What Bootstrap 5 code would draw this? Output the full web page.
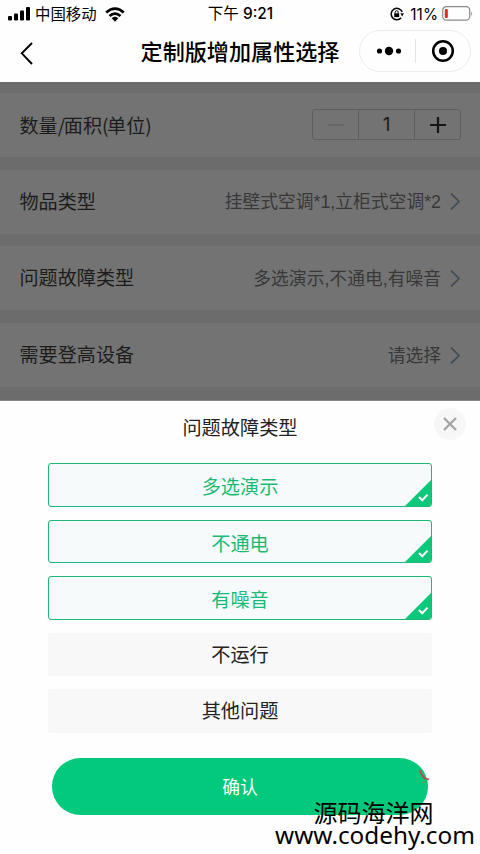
<!DOCTYPE html>
<html lang="zh-CN">
<head>
<meta charset="utf-8">
<meta name="viewport" content="width=device-width, initial-scale=1">
<title>定制版增加属性选择</title>
<link href="https://cdn.jsdelivr.net/npm/bootstrap@5.3.0/dist/css/bootstrap.min.css" rel="stylesheet">
<style>
  body { font-family: "Liberation Sans", "Noto Sans CJK SC", sans-serif; width: 480px; height: 854px; overflow: hidden; background: #fefefe; color: #000; }
  svg { display: block; flex: none; }
  .topbar { height: 82px; background: #fefefe; }
  .status-line { height: 27px; font-size: 15.4px; line-height: 27px; display: grid; grid-template-columns: 1fr auto 1fr; padding: 0 7px 0 8px; }
  .status-line svg { margin-top: -1px; }
  .carrier { padding-top: 1px; }
  .digits { font-family: Inter, "Noto Sans CJK SC", sans-serif; }
  .charge { margin-left: 6px; }
  .title-line { height: 50px; display: grid; grid-template-columns: 110px 260px 110px; }
  .title-text { font-size: 22.1px; font-weight: 500; line-height: 50px; padding-top: 1px; height: 50px; }
  .capsule { width: 112px; height: 42px; border: 1px solid #ececec; border-radius: 21px; margin-left: -11px; margin-top: -2px; }
  .capsule-rule { width: 1px; height: 24px; background: #e4e4e4; margin: 0 15px 0 12px; }
  .dimmed { height: 319px; background: #6c6c6c; padding-top: 10.8px; gap: 12.8px; border-bottom: 1px solid #858585; }
  .setting { height: 64px; flex: none; background: #737373; padding: 0 20px 0 19.5px; color: #1c1c1c; font-size: 19.1px; line-height: 28px; }
  .setting-name { padding-top: 2px; }
  .setting-name .latin { font-family: "Noto Sans CJK SC", sans-serif; letter-spacing: -1.4px; }
  .setting-value { font-size: 17.8px; color: #383838; gap: 9px; }
  .value-text { padding-top: 2px; }
  .stepper { width: 149px; height: 31px; border: 1px solid #5f5f5f; border-radius: 3px; margin-right: -1px; }
  .stepper > * { display: flex; align-items: center; justify-content: center; }
  .stepper-end { width: 45px; }
  .stepper-count { flex: 1; border: solid #5f5f5f; border-width: 0 1px; font-family: Inter, sans-serif; font-size: 19px; }
  .sheet { height: 453px; position: relative; }
  .sheet-title { font-size: 19.2px; line-height: 28px; padding-top: 14px; color: #222; margin-bottom: 20.4px; }
  .sheet-close { position: absolute; top: 7px; right: 14px; width: 32px; height: 32px; background: #f7f7f7; border: 0; padding: 0; }
  .choices { padding: 0 48px; gap: 12.8px; }
  .choice { height: 43.6px; background: #f8f8f8; border: 0; border-radius: 3px; padding: 2px 0 0; font-size: 19.2px; line-height: 41.6px; color: #222; position: relative; overflow: hidden; }
  .choice.picked { background: #f7fafa; border: 1.4px solid #1fb878; padding-top: 5px; line-height: 37px; color: #17bb76; }
  .choice svg { position: absolute; right: -1px; bottom: -1px; }
  .confirm { height: 57px; margin: 25px 52px 0; background: #02c97c; color: #fff; font-size: 17.8px; border: 0; padding: 5px 0 0; }
  .sitemark { position: absolute; right: 4px; bottom: 3px; width: 202px; color: #000; text-align: center; pointer-events: none; }
  .sitemark-name { font-size: 24px; line-height: 24px; padding-right: 3px; }
  .sitemark-url { font-family: "Noto Sans", sans-serif; font-size: 24.3px; line-height: 24px; height: 28px; margin-top: -3px; display: flex; justify-content: center; white-space: nowrap; }
  .red-fleck { position: absolute; left: 415px; top: 366px; }
</style>
<script src="https://cdn.jsdelivr.net/npm/bootstrap@5.3.0/dist/js/bootstrap.bundle.min.js"></script>
</head>
<body>
<header class="topbar">
  <div class="status-line">
    <div class="carrier d-flex align-items-center">
      <svg width="23" height="14" viewBox="0 0 23 14"><rect x="0" y="9" width="4" height="4.5" rx="1"/><rect x="6" y="6.5" width="4" height="7" rx="1"/><rect x="12" y="3.5" width="4" height="10" rx="1"/><rect x="18" y="0" width="4" height="13.5" rx="1"/></svg>
      <span class="ms-1">中国移动</span>
      <svg class="ms-2" width="20" height="15" viewBox="0 0 20 15" fill="none" stroke="#000" stroke-width="2.8"><path d="M1.2 5.5Q10-2.2 18.8 5.5M4.5 9Q10 4.2 15.5 9"/><path d="M6.7 11.2Q10 8.5 13.3 11.2L10 14.7Z" fill="#000" stroke="none"/></svg>
    </div>
    <div class="digits">下午 <span class="fw-medium">9:21</span></div>
    <div class="d-flex align-items-center justify-content-end">
      <svg width="14" height="14" viewBox="0 0 14 14" fill="none" stroke="#000" stroke-width="1.5"><path d="M12.2 5A5.7 5.7 0 1 0 11.2 10.8"/><path d="M10.3 6.3h3.7L12.2 9.4z" fill="#000" stroke="none"/><rect x="4.2" y="6.3" width="5" height="3.8" fill="#000" stroke="none"/><path d="M5.2 6.5V5.2a1.5 1.5 0 0 1 3 0v1.3" stroke-width="1"/></svg>
      <span class="digits charge">11%</span>
      <svg class="ms-1" width="31" height="15" viewBox="0 0 31 15"><rect x=".7" y=".7" width="27" height="13.5" rx="3.6" fill="none" stroke="#8b8b8b" stroke-width="1.2"/><rect x="2.8" y="3" width="3" height="9" rx="1" fill="#d92b20"/><path d="M29.3 5v5q1.6-2.5 0-5" fill="#777"/></svg>
    </div>
  </div>
  <div class="title-line align-items-center">
    <svg width="40" height="26" viewBox="0 0 40 26" fill="none" stroke="#000" stroke-width="1.9"><path d="M32 4 21.8 14.3 32 25"/></svg>
    <div class="title-text text-center">定制版增加属性选择</div>
    <div class="capsule d-flex align-items-center justify-content-center">
      <svg width="28" height="12" viewBox="0 0 28 12"><circle cx="4.5" cy="6" r="2.6"/><circle cx="14" cy="6" r="4.2"/><circle cx="23.5" cy="6" r="2.6"/></svg>
      <div class="capsule-rule"></div>
      <svg width="24" height="24" viewBox="0 0 24 24"><circle cx="12" cy="12" r="9.8" fill="none" stroke="#000" stroke-width="2.5"/><circle cx="12" cy="12" r="4"/></svg>
    </div>
  </div>
</header>

<main class="dimmed d-flex flex-column">
  <div class="setting d-flex align-items-center justify-content-between">
    <span class="setting-name">数量<span class="latin">/</span>面积<span class="latin">(</span>单位<span class="latin">)</span></span>
    <div class="stepper d-flex">
      <span class="stepper-end"><svg width="16" height="16" stroke="#626262" stroke-width="1.5"><path d="M0 8h16"/></svg></span>
      <span class="stepper-count">1</span>
      <span class="stepper-end"><svg width="16" height="16" stroke="#151515" stroke-width="2.2"><path d="M0 8h16M8 0v16"/></svg></span>
    </div>
  </div>
  <div class="setting d-flex align-items-center justify-content-between">
    <span class="setting-name">物品类型</span>
    <span class="setting-value d-flex align-items-center"><span>挂壁式空调*1,立柜式空调*2</span> <svg width="10" height="17" viewBox="0 0 10 17" fill="none" stroke="#404b55" stroke-width="1.7"><path d="M1 .7 9 8.5 1 16.3"/></svg></span>
  </div>
  <div class="setting d-flex align-items-center justify-content-between">
    <span class="setting-name">问题故障类型</span>
    <span class="setting-value d-flex align-items-center"><span class="value-text">多选演示,不通电,有噪音</span> <svg width="10" height="17" viewBox="0 0 10 17" fill="none" stroke="#404b55" stroke-width="1.7"><path d="M1 .7 9 8.5 1 16.3"/></svg></span>
  </div>
  <div class="setting d-flex align-items-center justify-content-between">
    <span class="setting-name">需要登高设备</span>
    <span class="setting-value d-flex align-items-center"><span class="value-text">请选择</span> <svg width="10" height="17" viewBox="0 0 10 17" fill="none" stroke="#404b55" stroke-width="1.7"><path d="M1 .7 9 8.5 1 16.3"/></svg></span>
  </div>
</main>

<section class="sheet d-flex flex-column">
  <div class="sheet-title text-center">问题故障类型</div>
  <button class="sheet-close rounded-circle d-flex align-items-center justify-content-center" aria-label="关闭"><svg width="14" height="14" stroke="#a5a5a5" stroke-width="2.4"><path d="M1 1 13 13M13 1 1 13"/></svg></button>
  <div class="choices d-flex flex-column">
    <button class="choice picked">多选演示<svg width="28" height="28"><path d="M0 28 28 0V28z" fill="#0bc979"/><path d="M15 18l3.2 3.2 5.3-5.6" fill="none" stroke="#fff" stroke-width="2"/></svg></button>
    <button class="choice picked">不通电<svg width="28" height="28"><path d="M0 28 28 0V28z" fill="#0bc979"/><path d="M15 18l3.2 3.2 5.3-5.6" fill="none" stroke="#fff" stroke-width="2"/></svg></button>
    <button class="choice picked">有噪音<svg width="28" height="28"><path d="M0 28 28 0V28z" fill="#0bc979"/><path d="M15 18l3.2 3.2 5.3-5.6" fill="none" stroke="#fff" stroke-width="2"/></svg></button>
    <button class="choice">不运行</button>
    <button class="choice">其他问题</button>
  </div>
  <button class="confirm rounded-pill">确认</button>
  <svg class="red-fleck" width="16" height="18" fill="none"><path d="M5 3Q7 9 10 11.500L14 12.500" stroke="#d63e48" stroke-width="1.8"/><path d="M7 15.500l4-1" stroke="#7d8b51"/></svg>
  <div class="sitemark">
    <div class="sitemark-name">源码海洋网</div>
    <div class="sitemark-url">www.codehy.com</div>
  </div>
</section>
</body>
</html>
